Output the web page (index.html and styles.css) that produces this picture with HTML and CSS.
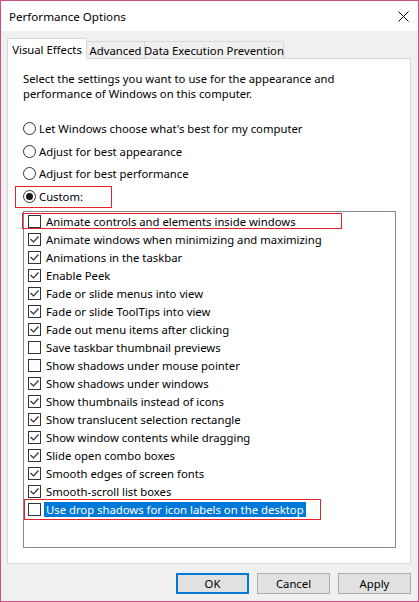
FILE: index.html
```html
<!DOCTYPE html>
<html>
<head>
<meta charset="utf-8">
<link rel="stylesheet" href="styles.css">
</head>
<body>
<div class="window">
  <div class="titlebar">
    <span class="title">Performance Options</span>
    <svg class="close" viewBox="0 0 11 11"><path d="M0.5 0.5 L10.5 10.5 M10.5 0.5 L0.5 10.5" stroke="#000" stroke-width="1" fill="none"/></svg>
  </div>
  <div class="main">
    <div class="tabs">
      <div class="tab active">Visual Effects</div>
      <div class="tab adv">Advanced</div>
      <div class="tab dep">Data Execution Prevention</div>
    </div>
    <div class="panel">
      <p class="intro">Select the settings you want to use for the appearance and<br>performance of Windows on this computer.</p>
      <div class="radios">
        <div class="radio"><span class="rb"></span>Let Windows choose what's best for my computer</div>
        <div class="radio"><span class="rb"></span>Adjust for best appearance</div>
        <div class="radio"><span class="rb"></span>Adjust for best performance</div>
        <div class="radio custom"><span class="rb on"></span>Custom:</div>
      </div>
      <div class="listbox">
        <div class="item mark-first"><span class="cb"></span><span class="txt">Animate controls and elements inside windows</span></div>
        <div class="item"><span class="cb on"><svg viewBox="0 0 11 11"><polyline points="1.5,5 4.5,8 9.5,2.5"/></svg></span><span class="txt">Animate windows when minimizing and maximizing</span></div>
        <div class="item"><span class="cb on"><svg viewBox="0 0 11 11"><polyline points="1.5,5 4.5,8 9.5,2.5"/></svg></span><span class="txt">Animations in the taskbar</span></div>
        <div class="item"><span class="cb on"><svg viewBox="0 0 11 11"><polyline points="1.5,5 4.5,8 9.5,2.5"/></svg></span><span class="txt">Enable Peek</span></div>
        <div class="item"><span class="cb on"><svg viewBox="0 0 11 11"><polyline points="1.5,5 4.5,8 9.5,2.5"/></svg></span><span class="txt">Fade or slide menus into view</span></div>
        <div class="item"><span class="cb on"><svg viewBox="0 0 11 11"><polyline points="1.5,5 4.5,8 9.5,2.5"/></svg></span><span class="txt">Fade or slide ToolTips into view</span></div>
        <div class="item"><span class="cb on"><svg viewBox="0 0 11 11"><polyline points="1.5,5 4.5,8 9.5,2.5"/></svg></span><span class="txt">Fade out menu items after clicking</span></div>
        <div class="item"><span class="cb"></span><span class="txt">Save taskbar thumbnail previews</span></div>
        <div class="item"><span class="cb"></span><span class="txt">Show shadows under mouse pointer</span></div>
        <div class="item"><span class="cb on"><svg viewBox="0 0 11 11"><polyline points="1.5,5 4.5,8 9.5,2.5"/></svg></span><span class="txt">Show shadows under windows</span></div>
        <div class="item"><span class="cb on"><svg viewBox="0 0 11 11"><polyline points="1.5,5 4.5,8 9.5,2.5"/></svg></span><span class="txt">Show thumbnails instead of icons</span></div>
        <div class="item"><span class="cb on"><svg viewBox="0 0 11 11"><polyline points="1.5,5 4.5,8 9.5,2.5"/></svg></span><span class="txt">Show translucent selection rectangle</span></div>
        <div class="item"><span class="cb on"><svg viewBox="0 0 11 11"><polyline points="1.5,5 4.5,8 9.5,2.5"/></svg></span><span class="txt">Show window contents while dragging</span></div>
        <div class="item"><span class="cb on"><svg viewBox="0 0 11 11"><polyline points="1.5,5 4.5,8 9.5,2.5"/></svg></span><span class="txt">Slide open combo boxes</span></div>
        <div class="item"><span class="cb on"><svg viewBox="0 0 11 11"><polyline points="1.5,5 4.5,8 9.5,2.5"/></svg></span><span class="txt">Smooth edges of screen fonts</span></div>
        <div class="item"><span class="cb on"><svg viewBox="0 0 11 11"><polyline points="1.5,5 4.5,8 9.5,2.5"/></svg></span><span class="txt">Smooth-scroll list boxes</span></div>
        <div class="item mark-last"><span class="cb"></span><span class="txt selected">Use drop shadows for icon labels on the desktop</span></div>
      </div>
    </div>
    <div class="buttons">
      <div class="btn default">OK</div>
      <div class="btn">Cancel</div>
      <div class="btn">Apply</div>
    </div>
  </div>
</div>
</body>
</html>
```
FILE: styles.css
```css
html, body {
  margin: 0;
  padding: 0;
  background: #fff;
}

.window {
  width: 419px;
  height: 602px;
  box-sizing: border-box;
  border: 1px solid #cf4e86;
  background: #f0f0f0;
  display: flex;
  flex-direction: column;
  font-family: "Noto Sans", sans-serif;
  font-size: 11.3px;
  color: #000;
}

.titlebar {
  height: 30px;
  flex: none;
  background: #fff;
  display: flex;
  align-items: center;
  justify-content: space-between;
  padding: 0 9px 0 8px;
}

.title {
  font-size: 11.6px;
}

.close {
  width: 11px;
  height: 11px;
}

.main {
  padding: 7px 7px 0 6px;
  display: flex;
  flex-direction: column;
}

.tabs {
  display: flex;
  align-items: flex-end;
  height: 20px;
}

.tab {
  box-sizing: border-box;
  height: 17px;
  border: 1px solid #d9d9d9;
  border-bottom: none;
  background: #f0f0f0;
  display: flex;
  align-items: center;
  justify-content: center;
  white-space: nowrap;
}

.tab.active {
  width: 80px;
  height: 21px;
  margin-bottom: -1px;
  background: #fff;
  position: relative;
  z-index: 1;
}

.tab.adv {
  width: 58px;
  border-left: none;
}

.tab.dep {
  width: 140px;
  margin-left: -1px;
}

.panel {
  box-sizing: border-box;
  height: 506px;
  background: #fff;
  border: 1px solid #d9d9d9;
  padding: 12px 13px 0 15px;
}

.intro {
  margin: 0;
  line-height: 15px;
}

.radios {
  margin-top: 16px;
  height: 91px;
  display: flex;
  flex-direction: column;
}

.radio {
  flex: 1;
  display: flex;
  align-items: center;
  white-space: nowrap;
}

.rb {
  width: 13px;
  height: 13px;
  box-sizing: border-box;
  border: 1px solid #333;
  border-radius: 50%;
  margin-right: 3px;
  display: flex;
  align-items: center;
  justify-content: center;
  flex: none;
}

.rb.on::before {
  content: "";
  width: 7px;
  height: 7px;
  border-radius: 50%;
  background: #1a1a1a;
}

.custom {
  position: relative;
  align-self: flex-start;
}

.custom::after {
  content: "";
  position: absolute;
  left: -8px;
  top: 50%;
  margin-top: -11px;
  width: 97px;
  height: 22px;
  box-sizing: border-box;
  border: 1px solid #e8202a;
}

.listbox {
  margin-top: 3px;
  width: 373px;
  height: 337px;
  box-sizing: border-box;
  border: 1px solid #828790;
}

.item {
  height: 18px;
  display: flex;
  align-items: center;
  padding-left: 4px;
  position: relative;
  white-space: nowrap;
}

.cb {
  width: 13px;
  height: 13px;
  box-sizing: border-box;
  border: 1px solid #333;
  margin-right: 5px;
  flex: none;
  display: flex;
}

.cb svg {
  width: 11px;
  height: 11px;
}

.cb polyline {
  fill: none;
  stroke: #333;
  stroke-width: 1.2;
}

.txt {
  line-height: 15px;
}

.txt.selected {
  background: #0078d7;
  color: #fff;
  margin-left: -2px;
  padding: 0 2px;
}

.mark-first::after {
  content: "";
  position: absolute;
  left: -2px;
  top: 1px;
  width: 320px;
  height: 16px;
  box-sizing: border-box;
  border: 1px solid #e8202a;
}

.mark-last::after {
  content: "";
  position: absolute;
  left: 0;
  top: -1px;
  width: 297px;
  height: 21px;
  box-sizing: border-box;
  border: 1px solid #e8202a;
}

.buttons {
  display: flex;
  justify-content: flex-end;
  gap: 8px;
  padding-top: 9px;
}

.btn {
  width: 73px;
  height: 21px;
  box-sizing: border-box;
  border: 1px solid #adadad;
  background: #e1e1e1;
  display: flex;
  align-items: center;
  justify-content: center;
}

.btn.default {
  border: 2px solid #0078d7;
}
```
